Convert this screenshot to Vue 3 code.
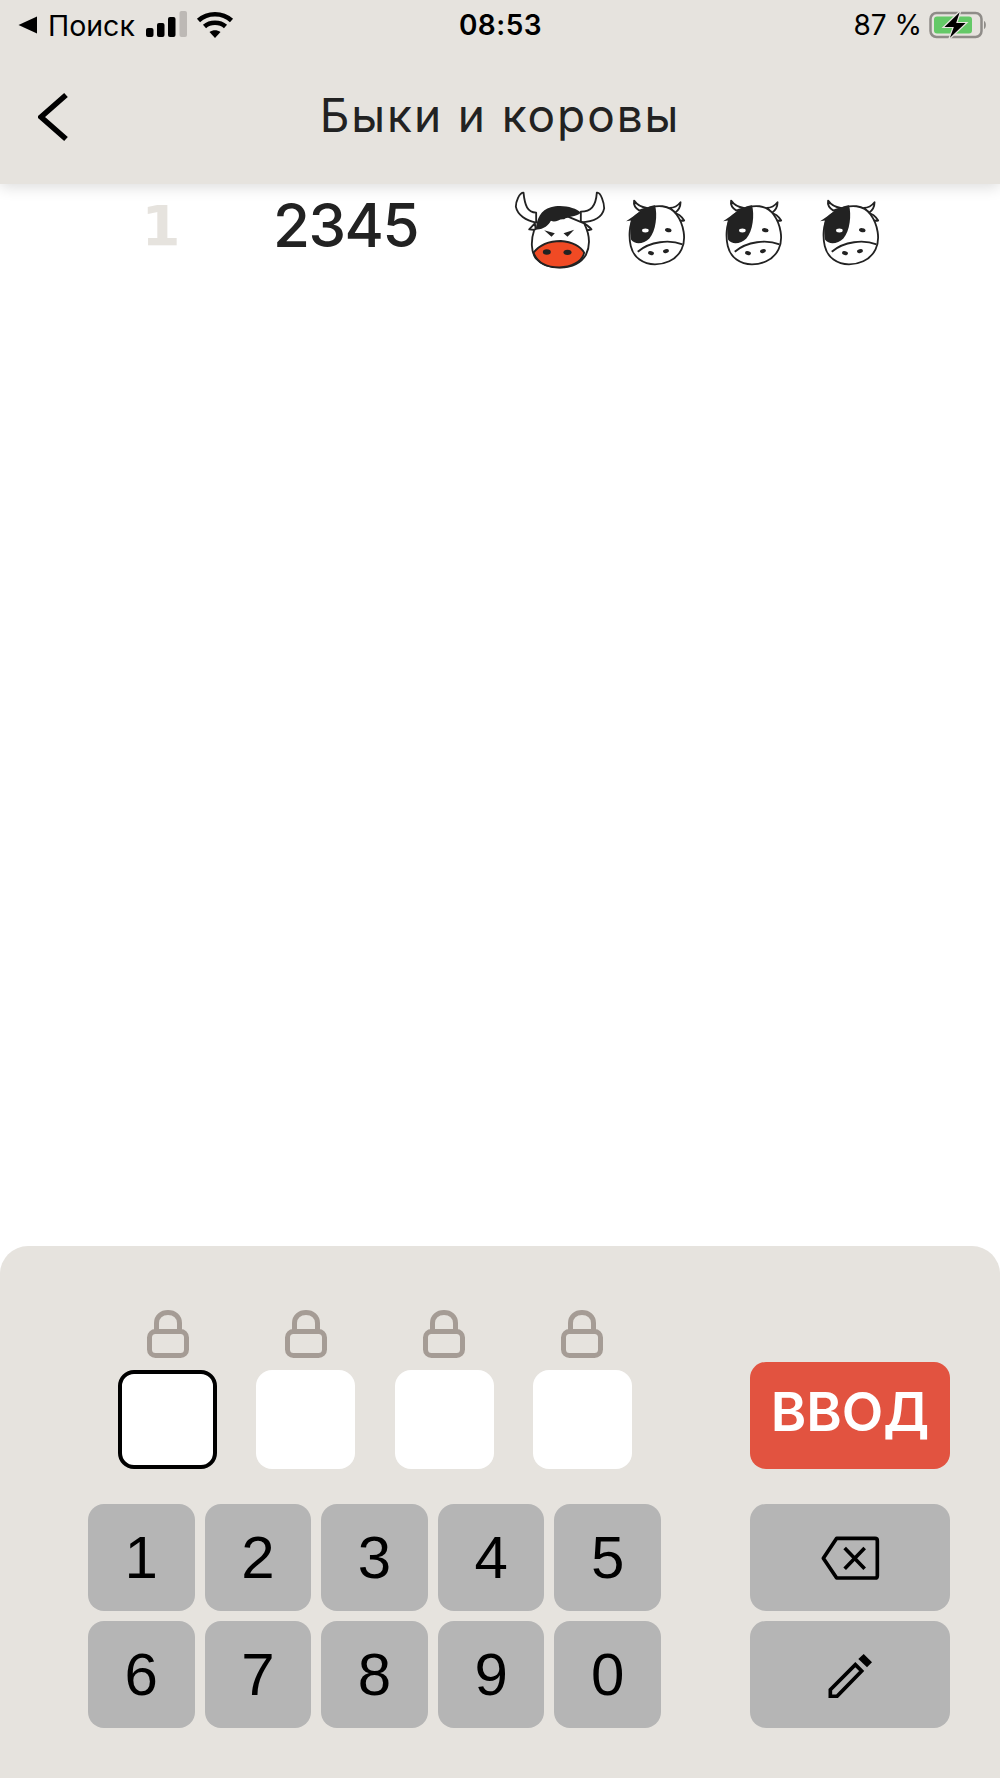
<template>
  <div class="game">
    <header class="top">
      <div class="status">
        <div class="status-left">
          <svg class="back-tri" width="20" height="18" viewBox="0 0 20 18"><path d="M19 0.5V17.5L0.5 9Z" fill="#000" /></svg>
          <span class="carrier">Поиск</span>
          <svg class="signal" width="42" height="28" viewBox="0 0 42 28">
            <rect x="0" y="17" width="7.5" height="9" rx="2" fill="#000" />
            <rect x="11" y="12" width="7.5" height="14" rx="2" fill="#000" />
            <rect x="22" y="6" width="7.5" height="20" rx="2" fill="#000" />
            <rect x="33.5" y="0" width="7.5" height="26" rx="2" fill="#bdb9b5" />
          </svg>
          <svg class="wifi" width="38" height="28" viewBox="0 0 38 28" fill="none" stroke="#000" stroke-width="4.6">
            <path d="M2.5 9.5C11.5 1.2 26.5 1.2 35.5 9.5" />
            <path d="M8.5 15.5C14 10.5 24 10.5 29.5 15.5" />
            <path d="M13.5 21L19 27L24.5 21C21 18.5 17 18.5 13.5 21Z" fill="#000" stroke="none" />
          </svg>
        </div>
        <span class="clock">08:53</span>
        <div class="status-right">
          <span class="percent">87 %</span>
          <svg width="60" height="30" viewBox="0 0 60 30" fill="none">
            <rect x="1.5" y="3" width="51" height="24" rx="6" stroke="#8f8c88" stroke-width="2.5" />
            <rect x="5" y="6.5" width="38" height="17" rx="3" fill="#64c967" />
            <path d="M55 11C57.5 12 57.5 18 55 19Z" fill="#8f8c88" />
            <path d="M32 0L14 17.5H24L19.5 30L38 12.5H28Z" fill="#000" stroke="#e6e3de" stroke-width="1.2" />
          </svg>
        </div>
      </div>
      <div class="nav">
        <button class="back" type="button" aria-label="Назад">
          <svg width="30" height="50" viewBox="0 0 30 50" fill="none" stroke="#000" stroke-width="5.5"><path d="M28 3L3 25L28 47" /></svg>
        </button>
        <h1 class="title">Быки и коровы</h1>
      </div>
    </header>

    <main class="history">
      <div v-for="row in history" :key="row.n" class="row">
        <span class="row-n">{{ row.n }}</span>
        <span class="row-guess">{{ row.guess }}</span>
        <div class="row-result">
          <template v-for="(kind, i) in row.result" :key="i">
            <svg v-if="kind === 'bull'" class="bull" width="92" height="80" viewBox="40 30 275 240" stroke="#222" stroke-width="5.5" stroke-linejoin="round">
              <path d="M106 98C80 96 72 78 68 38C55 38 45 65 45 80C50 105 75 122 106 128Z" fill="#fff" />
              <path d="M240 95C270 95 285 80 288 38C300 35 310 70 310 85C305 110 280 125 240 127Z" fill="#fff" />
              <path d="M102 130L85 148L105 150Z" fill="#fff" />
              <path d="M240 125C250 130 265 140 272 148C260 152 250 150 245 148Z" fill="#fff" />
              <path d="M100 150C90 180 90 215 105 235C125 258 150 263 178 263C210 262 240 250 255 225C270 195 265 160 250 130L178 100Z" fill="#fff" />
              <path d="M98 218C120 190 150 183 180 183C215 185 240 200 250 218C245 245 210 262 175 262C140 262 110 250 98 218Z" fill="#f04a24" />
              <path d="M105 148C108 115 120 90 150 82C180 72 225 82 240 98C225 112 200 108 190 118C175 115 165 130 150 122C145 135 125 150 105 148Z" fill="#222" stroke="none" />
              <path d="M130 151L162 160L152 170Z M220 149L188 160L200 170Z" fill="#222" stroke="none" />
              <ellipse cx="138" cy="216" rx="12" ry="8" fill="#222" stroke="none" />
              <ellipse cx="200" cy="217" rx="12" ry="8" fill="#222" stroke="none" />
            </svg>
            <svg v-else class="cow" width="64" height="68" viewBox="370 50 190 205" stroke="#222" stroke-width="5.5" stroke-linejoin="round">
              <path d="M418 88C405 80 400 68 402 58C412 72 425 78 440 80Z" fill="#fff" />
              <path d="M510 80C522 80 535 72 542 63C542 78 535 88 525 95Z" fill="#fff" />
              <path d="M522 95C535 97 545 105 553 118C540 120 530 115 526 108Z" fill="#fff" />
              <path d="M430 85C470 68 510 70 530 100C552 130 560 175 545 205C528 240 490 250 465 250C430 250 400 230 392 195C385 165 388 130 400 110Z" fill="#fff" />
              <path d="M413 212C450 180 510 175 548 190" fill="none" />
              <path d="M378 120L400 105C420 90 440 75 465 72C473 100 468 150 448 172C432 188 405 192 393 176C388 150 392 125 392 118Z" fill="#222" stroke="none" />
              <ellipse cx="436" cy="148" rx="10" ry="6" fill="#fff" stroke="none" />
              <ellipse cx="505" cy="147" rx="10" ry="6" fill="#222" stroke="none" transform="rotate(10 505 147)" />
              <ellipse cx="453" cy="216" rx="9" ry="6" fill="#222" stroke="none" transform="rotate(15 453 216)" />
              <ellipse cx="498" cy="210" rx="9" ry="6" fill="#222" stroke="none" transform="rotate(-15 498 210)" />
            </svg>
          </template>
        </div>
      </div>
    </main>

    <section class="panel">
      <div class="entry">
        <div class="slots">
          <div v-for="(slot, i) in slots" :key="i" class="slot">
            <svg width="42" height="48" viewBox="0 0 42 48" fill="none" stroke="#a59c95" stroke-width="5">
              <path d="M9.5 21V13C9.5 6.5 14.5 2.5 21 2.5C27.5 2.5 32.5 6.5 32.5 13V21" />
              <rect x="2.5" y="21.5" width="37" height="24" rx="6" />
            </svg>
            <div class="cell" :class="{ active: i === active }">{{ slot }}</div>
          </div>
        </div>
        <button class="enter" type="button">ВВОД</button>
      </div>

      <div class="pad">
        <div class="digits">
          <button v-for="d in digits" :key="d" class="key" type="button">{{ d }}</button>
        </div>
        <div class="actions">
          <button class="key" type="button" aria-label="Стереть">
            <svg width="60" height="46" viewBox="360 164 180 138" fill="none" stroke="#000" stroke-width="11">
              <path d="M410 174H525Q532 174 532 181V286Q532 293 525 293H410L370 234Z" stroke-linejoin="round" />
              <path d="M434 203L494 265M494 203L434 265" />
            </svg>
          </button>
          <button class="key" type="button" aria-label="Заметки">
            <svg width="46" height="46" viewBox="380 512 138 138" fill="none" stroke="#000" stroke-width="11">
              <path d="M490 518L515 543L500 558L474 533Z" fill="#000" stroke="none" />
              <path d="M465 550L484 569L410 645H390V625Z" />
            </svg>
          </button>
        </div>
      </div>
    </section>
  </div>
</template>

<script setup>
import { ref } from 'vue'

const history = ref([
  { n: 1, guess: '2345', result: ['bull', 'cow', 'cow', 'cow'] },
])
const slots = ref(['', '', '', ''])
const active = ref(0)
const digits = [1, 2, 3, 4, 5, 6, 7, 8, 9, 0]
</script>

<style>
html, body { margin: 0; background: #fff; }
</style>

<style scoped>
.game {
  display: flex;
  flex-direction: column;
  width: 1000px;
  height: 1778px;
  overflow: hidden;
  font-family: Inter, "Noto Sans", sans-serif;
  color: #222;
}

.top {
  position: relative;
  z-index: 1;
  height: 184px;
  background: #e6e3de;
  box-shadow: 0 3px 14px rgba(0,0,0,0.14);
}

.status {
  display: grid;
  grid-template-columns: 1fr auto 1fr;
  align-items: center;
  height: 50px;
  padding: 0 11px 0 18px;
  color: #000;
  font-size: 28px;
}

.status-left { display: flex; align-items: center; }
.status-right { display: flex; align-items: center; justify-content: flex-end; gap: 7px; }
.carrier { margin: 0 11px 0 10px; font-size: 28.5px; }
.signal { margin-right: 8px; }
.clock { margin-left: -6px; font-weight: 600; letter-spacing: 0.5px; }

.nav {
  display: flex;
  align-items: center;
  justify-content: center;
  position: relative;
  box-sizing: border-box;
  height: 134px;
  padding-bottom: 4px;
}

.back {
  position: absolute;
  left: 38px;
  top: 42px;
  padding: 0;
  border: none;
  background: none;
}

.title {
  margin: 0;
  font-size: 46px;
  font-weight: 400;
  letter-spacing: 1.9px;
  color: #222;
}

.history { flex: 1; }

.row {
  display: flex;
  align-items: center;
  height: 82px;
  padding-left: 140px;
}

.row-n {
  width: 42px;
  font-family: "DejaVu Sans", sans-serif;
  font-size: 56px;
  font-weight: 700;
  text-align: center;
  color: #e6e3de;
}

.row-guess {
  margin-left: 91px;
  font-size: 60px;
  font-weight: 500;
  letter-spacing: -1.5px;
  color: #222;
}

.row-result {
  display: flex;
  align-items: center;
  margin-left: 96px;
}

.cow { margin: 14px 0 0 33px; }
.bull { margin-top: 10px; }
.bull + .cow { margin-left: 17px; }

.panel {
  padding: 64px 50px 50px 0;
  background: #e6e3de;
  border-radius: 28px 28px 0 0;
}

.entry {
  display: flex;
  align-items: flex-end;
  justify-content: space-between;
  padding-left: 118px;
}

.slots { display: flex; gap: 39.3px; }

.slot {
  display: flex;
  flex-direction: column;
  align-items: center;
  gap: 12px;
}

.cell {
  box-sizing: border-box;
  width: 99px;
  height: 99px;
  background: #fff;
  border-radius: 16px;
}

.cell.active { border: 4px solid #000; }

.enter {
  width: 200px;
  height: 107px;
  padding: 0 0 9px;
  border: none;
  border-radius: 16px;
  background: #e25340;
  color: #fff;
  font-family: Inter, sans-serif;
  font-size: 54px;
  font-weight: 600;
}

.pad {
  display: flex;
  justify-content: space-between;
  margin-top: 35px;
  padding-left: 88px;
}

.digits {
  display: grid;
  grid-template-columns: repeat(5, 106.6px);
  grid-auto-rows: 107px;
  gap: 10px;
}

.actions {
  display: grid;
  grid-template-columns: 200px;
  grid-auto-rows: 107px;
  gap: 10px;
}

.key {
  display: flex;
  align-items: center;
  justify-content: center;
  padding: 0;
  border: none;
  border-radius: 16px;
  background: #b5b5b5;
  color: #000;
  font-family: "Liberation Sans", Arial, sans-serif;
  font-size: 60px;
}
</style>
